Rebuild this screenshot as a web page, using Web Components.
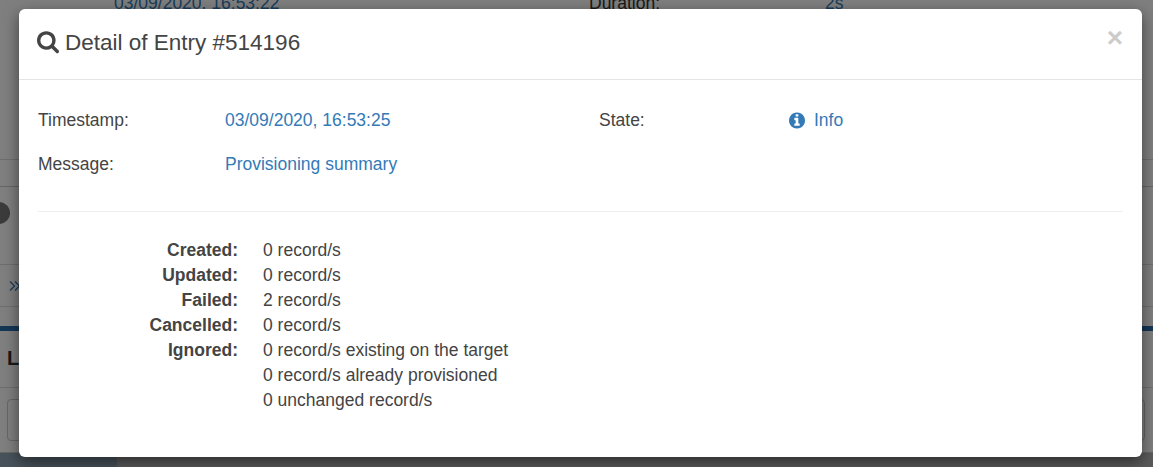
<!DOCTYPE html>
<html lang="en"><head><meta charset="utf-8"><title>Detail of Entry</title>
<style>
html,body{margin:0;padding:0;height:467px;overflow:hidden;background:#fff;font-family:"Liberation Sans",Arial,sans-serif;}
</style></head><body>
<page-behind></page-behind>
<modal-backdrop>
  <entry-modal>
    <span slot="title">Detail of Entry #514196</span>
    <detail-field label="Timestamp:" value="03/09/2020, 16:53:25"></detail-field>
    <detail-field label="State:" value="Info" icon></detail-field>
    <detail-field label="Message:" value="Provisioning summary"></detail-field>
    <summary-list slot="summary">
      <summary-row label="Created:"><div>0 record/s</div></summary-row>
      <summary-row label="Updated:"><div>0 record/s</div></summary-row>
      <summary-row label="Failed:"><div>2 record/s</div></summary-row>
      <summary-row label="Cancelled:"><div>0 record/s</div></summary-row>
      <summary-row label="Ignored:"><div>0 record/s existing on the target</div><div>0 record/s already provisioned</div><div>0 unchanged record/s</div></summary-row>
    </summary-list>
  </entry-modal>
</modal-backdrop>
<script>
function def(name,html,init){
  customElements.define(name,class extends HTMLElement{
    connectedCallback(){
      if(this.shadowRoot)return;
      const r=this.attachShadow({mode:'open'});
      r.innerHTML=html;
      if(init)init(this,r);
    }
  });
}
def('page-behind',`<style>
:host{display:block;height:467px;overflow:hidden;font:17.5px "Liberation Sans",Arial,sans-serif;color:#333}
.top{display:grid;grid-template-columns:475px 236px 1fr;padding-left:114px;box-sizing:border-box;line-height:18px;margin-top:-6px;height:166px;border-bottom:1px solid #ddd}
.top a{color:#337ab7}
.a{height:26px;border-bottom:1px solid #ccc}
.b{height:77px;border-bottom:1px solid #ddd;display:flex;align-items:center}
.dot{width:22px;height:22px;border-radius:50%;background:#777;margin:-26px 0 0 -12px}
.c{height:41px;border-bottom:1px solid #ddd;padding-left:9px;display:flex;align-items:center}
.bar{height:5px;background:#286fad;margin-top:19px}
.d{height:57px;border-bottom:1px solid #ddd;padding-left:7px;box-sizing:border-box;font:bold 20px "Liberation Sans",Arial,sans-serif;line-height:54px;color:#333}
.e{height:65px;padding:11px 8px 0 7px;box-sizing:border-box;border-bottom:1px solid #ccc}
.box{height:42px;border:1px solid #ccc;border-radius:4px;box-sizing:border-box}
.f{display:flex;height:20px}
.f i{display:block;width:117px;background:#8fa5b5}
.f b{display:block;flex:1;background:#b5b5b5}
</style>
<div class="top"><a>03/09/2020, 16:53:22</a><span>Duration:</span><a>2s</a></div>
<div class="a"></div>
<div class="b"><div class="dot"></div></div>
<div class="c"><svg width="12" height="12" viewBox="0 0 12 12" fill="none" stroke="#337ab7" stroke-width="1.3"><path d="M1 1.5 5.5 6 1 10.5M6 1.5 10.5 6 6 10.5"/></svg></div>
<div class="bar"></div>
<div class="d">Log</div>
<div class="e"><div class="box"></div></div>
<div class="f"><i></i><b></b></div>`);
def('modal-backdrop',`<style>
:host{position:absolute;inset:0;display:block;background:rgba(0,0,0,.5);padding:9px 11px 0 19px;box-sizing:border-box;height:467px;overflow:hidden}
</style><slot></slot>`);
def('entry-modal',`<style>
:host{display:block;height:448px;background:#fff;border-radius:6px;box-shadow:0 5px 15px rgba(0,0,0,.5);font:17.5px/25px "Liberation Sans",Arial,sans-serif;color:#444;box-sizing:border-box}
header{height:71px;border-bottom:1px solid #e5e5e5;box-sizing:border-box;padding:0 19px 2px 18px;display:flex;align-items:center}
h4{margin:0;font:22.5px/26px "Liberation Sans",Arial,sans-serif;color:#444;flex:1;display:flex;align-items:center;gap:6px}
.x{font:bold 28px/1 "Liberation Sans",Arial,sans-serif;color:#000;opacity:.2;align-self:flex-start;margin-top:15px}
.fields{display:grid;grid-template-columns:561px 1fr;row-gap:19px;padding:28px 19px 34px}
hr{border:0;border-top:1px solid #eee;margin:0 19px}
.sum{padding-top:26px}
svg{display:block}
</style>
<header><h4><svg width="22" height="24" viewBox="0 0 1664 1792" fill="#444"><path d="M1152 704q0-185-131.5-316.5t-316.5-131.5-316.5 131.5-131.5 316.5 131.5 316.5 316.5 131.5 316.5-131.5 131.5-316.5zm512 832q0 52-38 90t-90 38q-54 0-90-38l-343-342q-179 124-399 124-143 0-273.5-55.5t-225-150-150-225-55.5-273.5 55.5-273.5 150-225 225-150 273.5-55.5 273.5 55.5 225 150 150 225 55.5 273.5q0 220-124 399l343 343q37 37 37 90z"/></svg><slot name="title"></slot></h4><span class="x">×</span></header>
<div class="fields"><slot></slot></div>
<hr>
<div class="sum"><slot name="summary"></slot></div>`);
def('detail-field',`<style>
:host{display:grid;grid-template-columns:187px 1fr;font-size:17.5px;line-height:25px}
.v{color:#337ab7;display:flex;align-items:center;gap:9px}
svg{display:block;margin-left:3px}
</style><span class="l"></span><span class="v"></span>`,(h,r)=>{
  r.querySelector('.l').textContent=h.getAttribute('label');
  const v=r.querySelector('.v');
  if(h.hasAttribute('icon'))v.innerHTML='<svg width="16" height="19" viewBox="0 0 1536 1792" fill="#337ab7"><path d="M1024 1376v-160q0-14-9-23t-23-9h-96v-512q0-14-9-23t-23-9h-320q-14 0-23 9t-9 23v160q0 14 9 23t23 9h96v320h-96q-14 0-23 9t-9 23v160q0 14 9 23t23 9h448q14 0 23-9t9-23zm-128-896v-160q0-14-9-23t-23-9h-192q-14 0-23 9t-9 23v160q0 14 9 23t23 9h192q14 0 23-9t9-23zm640 416q0 209-103 385.5t-279.5 279.5-385.5 103-385.5-103-279.5-279.5-103-385.5 103-385.5 279.5-279.5 385.5-103 385.5 103 279.5 279.5 103 385.5z"/></svg>';
  v.append(h.getAttribute('value'));
});
def('summary-list',`<style>:host{display:block}</style><slot></slot>`);
def('summary-row',`<style>
:host{display:grid;grid-template-columns:219px 1fr;column-gap:25px;font-size:17.5px;line-height:25px}
.l{font-weight:bold;text-align:right}
</style><span class="l"></span><div><slot></slot></div>`,(h,r)=>{r.querySelector('.l').textContent=h.getAttribute('label');});
</script>
</body></html>
